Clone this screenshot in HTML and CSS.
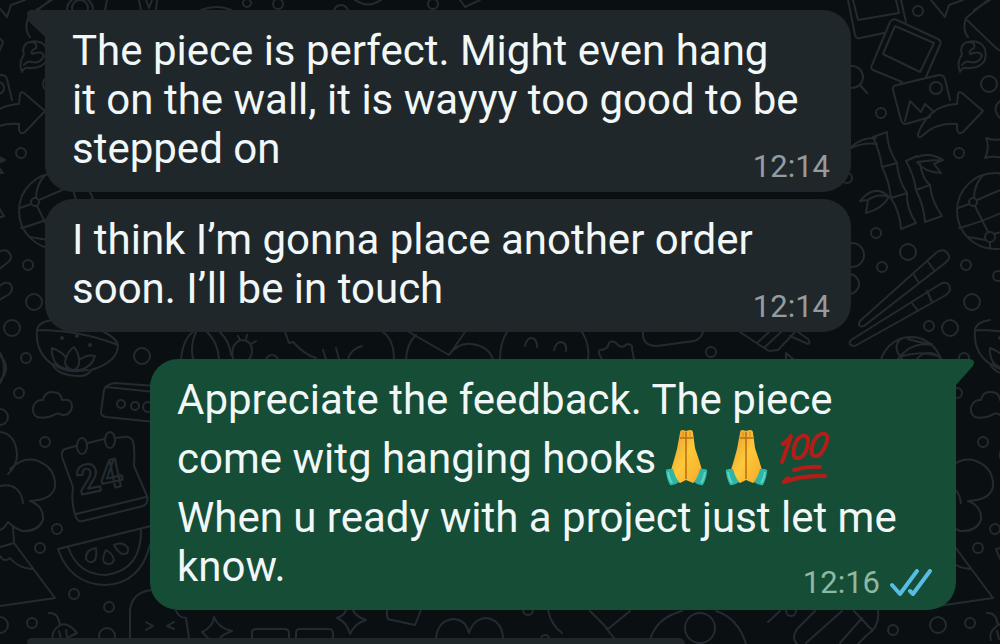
FILE: index.html
```html
<!DOCTYPE html>
<html lang="en">
<head>
<meta charset="utf-8">
<meta name="viewport" content="width=device-width, initial-scale=1">
<title>Chat</title>
<link rel="stylesheet" href="styles.css">
</head>
<body>
<svg class="wallpaper" viewBox="0 0 1000 644" preserveAspectRatio="xMinYMin slice" aria-hidden="true">
  <defs>
    <g id="doodles">
      <!-- top edge -->
      <path d="M36 10L52 0M107 0L105 10M139 0l2 10M157 0l-1 10M146 0l3 8 3-8M355 0q13 9 26 0M460 0l5 7 15-7M199 11q18-8 34 0"/>
      <circle cx="80" cy="10" r="13"/><circle cx="80" cy="8" r="8"/>
      <circle cx="247" cy="3" r="4"/><circle cx="278" cy="4" r="5"/><circle cx="341" cy="12" r="7"/><circle cx="433" cy="4" r="5"/>
      <path d="M931 0L945 17 949 5 963 0M988 0L966 18Q962 30 968 37M967 20L995 47Q1000 52 1004 50"/>
      <!-- flame -->
      <path d="M968 42Q962 43 961 50Q963 55 960 58Q957 64 960 72Q962 67 967 68Q980 69 985 60Q988 48 980 43Q974 40 968 42M968 42Q976 42 974 48Q968 51 970 54Q980 50 982 56Q978 64 970 62Q966 60 962 65"/>
      <!-- photos -->
      <path d="M848 0L855 35Q856 39 860 38L884 33M901 0L906 22M853 0L858 20 899 13 896 0"/>
      <path d="M902 82L873 70Q870 68 872 65L890 22Q893 18 897 20L938 39Q942 41 940 45L926 77M895 26L934 43 920 72 883 54Z"/>
      <path d="M930 117L906 124Q902 124 901 120L893 90Q892 86 897 85L939 75Q944 75 945 79L950 100M905 121L910 101 921 112 925 104 934 112"/>
      <circle cx="936" cy="88" r="6"/>
      <path d="M983 111L962 93Q958 91 958 95L957 104Q929 105 918 134Q918 139 922 136Q936 122 957 124L957 130Q959 135 963 132Z"/>
      <circle cx="852" cy="77" r="11"/><path d="M860 85l7 8"/>
      <circle cx="918" cy="11" r="5"/><circle cx="881" cy="113" r="5"/><circle cx="989" cy="84" r="8"/><circle cx="959" cy="153" r="5"/><circle cx="847" cy="178" r="5"/><circle cx="876" cy="233" r="5"/>
      <path d="M1008 137Q996 142 986 138Q990 148 985 158Q994 155 1008 159M1000 101q-9 7 0 17"/>
      <!-- bamboo -->
      <path d="M873 137L887 132Q887 148 897 163Q898 180 907 193Q906 208 916 223L901 229Q900 212 891 198Q889 180 882 167Q880 152 873 137ZM882 167l15-4M891 198l16-5M851 147Q862 137 876 138M877 144Q864 142 851 148M889 197Q875 183 860 201L868 200 866 213Q882 209 889 197Q878 193 868 200"/>
      <path d="M917 156L906 161Q914 175 916 190Q924 206 925 222L942 216Q931 200 930 185Q923 180 920 164M916 190l14-5M917 157Q930 152 943 160L934 164 941 173Q924 172 917 162Q930 160 943 160"/>
      <!-- globe -->
      <circle cx="995" cy="211" r="38"/>
      <circle cx="973" cy="202" r="4"/><circle cx="990" cy="237" r="5"/>
      <path d="M974 198Q974 185 983 175M977 200L1014 184M975 206L988 232M969 204L958 208M959 228Q990 220 1030 199M994 234L1031 223M986 240L968 237M990 242V249M1000 174L1010 184L1022 235"/>
      <!-- chopsticks -->
      <path d="M860 321L937 252Q945 247 949 256Q950 259 945 263L864 326Q857 328 860 321ZM928 262l6 8M914 275l5 8M851 340L942 283Q950 281 950 290Q949 293 946 295L855 346Q847 346 851 340ZM927 291l5 11M912 303l6 8"/>
      <circle cx="908" cy="252" r="8"/><circle cx="882" cy="267" r="5"/><circle cx="966" cy="265" r="5"/><circle cx="998" cy="276" r="5"/><circle cx="972" cy="302" r="8"/><circle cx="929" cy="326" r="5"/><circle cx="950" cy="328" r="8"/><circle cx="852" cy="255" r="12"/><circle cx="849" cy="284" r="10"/><circle cx="964" cy="358" r="5"/><circle cx="957" cy="393" r="5"/>
      <circle cx="911" cy="368" r="31"/><path d="M902 338Q891 346 902 359M908 339Q920 343 932 344M898 359Q912 341 932 345M902 356Q924 350 940 357"/>
      <!-- lotus bowl -->
      <path d="M37 330Q35 352 52 364Q58 376 80 376Q88 376 91 370Q118 362 118 345Q116 338 104 332M37 330Q80 330 118 345M37 330Q38 322 52 320M54 364Q64 374 88 370"/>
      <path d="M52 348Q63 352 66 358Q69 350 74 347Q79 354 79 360Q87 354 95 356Q92 367 80 370Q60 370 55 362Q51 354 52 348ZM66 358Q63 366 70 369M79 360Q80 366 75 370"/>
      <circle cx="62" cy="338" r="1"/><circle cx="77" cy="336" r="1"/><circle cx="90" cy="345" r="1"/>
      <circle cx="142" cy="356" r="8"/><circle cx="45" cy="442" r="5"/><circle cx="0" cy="417" r="8"/><circle cx="-9" cy="368" r="15"/>
      <!-- cloud and radio -->
      <path d="M37 417Q32 414 33 407Q36 399 43 400Q45 391 53 392Q61 392 62 400Q72 398 72 407Q70 416 62 415Q58 412 54 415Q46 419 37 417Z"/>
      <path d="M155 386L115 383Q106 384 104 390L101 412Q101 416 106 417L155 422M106 387L155 392"/>
      <circle cx="121" cy="404" r="4"/><circle cx="135" cy="406" r="4"/><circle cx="148" cy="407" r="5"/>
      <!-- calendar -->
      <path d="M76 446L65 449Q61 451 62 457L73 487Q71 503 75 514Q77 523 83 521L143 506Q149 503 147 496L134 466Q135 450 133 441Q130 436 124 437L116 438M88 443l16-4M76 514L146 497"/>
      <ellipse cx="82" cy="446" rx="5" ry="8"/><ellipse cx="110" cy="440" rx="5" ry="8"/>
      <text class="calendar-day" x="80" y="495" transform="rotate(-12 80 495)">24</text>
      <!-- clouds and mountain -->
      <path d="M0 432Q16 434 17 455Q17 466 8 474M10 469Q24 456 38 461Q56 468 55 487Q52 500 30 501Q44 506 43 520Q38 532 22 531Q14 528 8 522Q4 529 0 530M0 486Q20 482 23 503M13 527L14 542M0 547L14 543 55 598 0 606M0 556Q4 563 10 558Q18 568 32 569"/>
      <circle cx="57" cy="529" r="5"/><circle cx="40" cy="548" r="5"/><circle cx="74" cy="594" r="5"/><circle cx="109" cy="607" r="5"/><circle cx="32" cy="623" r="5"/><circle cx="0" cy="625" r="8"/><circle cx="107" cy="636" r="8"/>
      <!-- watermelon -->
      <path d="M58 549L155 525M58 549Q70 584 105 585Q140 584 150 545M68 547Q78 575 106 575Q142 570 141 529M96 548Q85 550 86 559Q90 565 95 560Q97 555 96 548ZM106 550Q101 560 105 563Q111 566 114 560Q113 554 106 550ZM114 545Q123 541 128 548Q129 555 122 554Q117 551 114 545Z"/>
      <path d="M49 613Q58 612 60 625Q50 632 53 640M60 625Q68 622 77 633l-8 4M59 631l2 8M66 630l1 8"/>
      <!-- bottom edge -->
      <path d="M130 638V610Q132 592 152 590M146 622l7 4-7 4M174 622l-7 4 7 3M175 608Q178 618 186 618L189 638"/>
      <path d="M208 638L202 632Q213 627 214 617Q218 628 232 631Q222 635 220 638M252 638v-5q0-4 4-4h28q5 0 5 4v5M296 638v-5q0-4 4-4h28q5 0 5 4v5M346 610Q345 615 337 618Q347 622 350 634Q355 623 366 620Q356 617 353 610M387 610v6q0 4 5 4l23 5 6-15M436 638Q438 620 454 619Q466 620 469 633Q474 618 487 618Q502 621 503 638"/>
      <circle cx="528" cy="610" r="5"/><circle cx="545" cy="639" r="4"/>
      <path d="M548 610Q551 625 562 633M590 611l18 18 22-18M606 628l8 10M650 640Q656 618 682 611M716 611Q738 618 746 644"/>
      <circle cx="700" cy="628" r="15"/>
      <path d="M797 644Q791 638 797 629L815 611M806 643L842 611M840 643L862 618M854 611L871 629M878 610Q880 627 867 635L858 644M780 611l-12 11"/>
      <circle cx="791" cy="611" r="5"/><circle cx="893" cy="630" r="5"/>
      <!-- between the second and third messages -->
      <path d="M181 362Q182 340 193 332M193 359Q190 345 196 332M207 332Q218 342 219 359M220 332Q230 342 231 355M233 359Q230 345 240 340Q252 340 252 350Q252 356 249 359M240 340l-2-4M246 339l1-4M251 344l5-3M285 332l4 11 4-1Q305 355 316 358M323 350l3 9M336 348l3 11M348 359q3-10 14-13M383 332Q394 340 394 359M406 359Q407 343 416 335M409 332L449 355 465 332M449 355Q458 342 472 344Q488 346 493 359M500 359Q500 343 507 332M582 332Q590 345 588 359M525 346q2-9 7-8 5 1 5 9M554 350q2-8 7-8 6 1 5 9M602 359Q597 352 600 350Q608 350 609 343Q613 339 618 345Q622 349 627 344Q633 344 632 349L634 359"/>
      <path d="M643 332Q642 346 657 346L694 341Q701 339 703 332M740 332L758 344 769 351 778 350 795 332M757 343l12-11M765 347l16-15M790 336l18 8q3-1 0-5l-10-7M786 361V353l8 7"/>
      <circle cx="272" cy="361" r="6"/><circle cx="711" cy="352" r="5"/>
    </g>
  </defs>
  <use href="#doodles"/>
  <use href="#doodles" x="938"/>
  <use href="#doodles" x="-938"/>
</svg>

<svg class="symbols" aria-hidden="true">
  <defs>
    <linearGradient id="skin" x1="0" y1="0" x2="1" y2="1">
      <stop offset="0" stop-color="#e39a2c"/><stop offset=".5" stop-color="#ffc83a"/><stop offset="1" stop-color="#f3a928"/>
    </linearGradient>
    <symbol id="pray" viewBox="0 0 60 69">
      <path fill="url(#skin)" d="M30 7Q24 4 24 9L21 25 18 36 15 46Q17 55 24 59L30 56 37 59Q44 55 46 46L43 36 39 24 37 9Q37 4 30 7Z"/>
      <path fill="none" stroke="#b86e13" stroke-width="1.500" d="M30 8V55M24 14h13"/>
      <path fill="none" stroke="#d98a20" d="M27 8v6M34 8v6"/>
      <path fill="#2fb5a6" d="M10 48Q9 45 13 45L17 45Q19 53 23 58Q18 62 14 61Q11 56 10 48ZM51 48Q52 45 48 45L44 45Q42 53 38 58Q43 62 47 61Q50 56 51 48Z"/>
      <path fill="none" stroke="#5fd2c5" stroke-width="2" d="M12 48Q13 55 16 59M49 48Q48 55 45 59"/>
    </symbol>
    <symbol id="hundred" viewBox="0 0 60 69">
      <g fill="none" stroke="#b51d18" stroke-width="4" stroke-linecap="round" stroke-linejoin="round">
        <path d="M7 20Q13 16 15 12Q11 25 6 38"/>
        <path d="M24 13Q33 9 32 19Q30 32 23 34Q16 35 18 24Q20 16 24 13ZM43 11Q53 7 51 17Q48 28 42 32Q34 34 36 23Q38 14 43 11Z"/>
        <path d="M18 46Q31 42 44 43M8 58Q27 51 49 52M8 58l4-4"/>
      </g>
    </symbol>
    <symbol id="tail" viewBox="0 0 20 28">
      <path d="M0 0H14Q20 1 17 7L0 26Z"/>
    </symbol>
  </defs>
</svg>

<main class="chat">
  <article class="message incoming">
    <svg class="tail" aria-hidden="true"><use href="#tail"/></svg>
    <p class="text">The piece is perfect. Might even hang<br>it on the wall, it is wayyy too good to be stepped on <span class="meta"><time>12:14</time></span></p>
  </article>
  <article class="message incoming follow-up">
    <p class="text">I think I’m gonna place another order soon. I’ll be in touch <span class="meta"><time>12:14</time></span></p>
  </article>
  <article class="message outgoing">
    <svg class="tail" aria-hidden="true"><use href="#tail"/></svg>
    <p class="text">Appreciate the feedback. The piece come witg hanging hooks<svg class="emoji" role="img" aria-label="Folded hands"><use href="#pray"/></svg><svg class="emoji" role="img" aria-label="Folded hands"><use href="#pray"/></svg><svg class="emoji" role="img" aria-label="Hundred points"><use href="#hundred"/></svg><br>When u ready with a project just let me know. <span class="meta"><time>12:16</time><svg class="ticks" viewBox="0 0 42 28" role="img" aria-label="Read"><path d="M2 16L10 25 27 2M20 22l3 3L40 2"/></svg></span></p>
  </article>
  <article class="message incoming next">
    <svg class="tail" aria-hidden="true"><use href="#tail"/></svg>
  </article>
</main>
</body>
</html>
```
FILE: styles.css
```css
* {
  box-sizing: border-box;
}

body {
  margin: 0;
  height: 100vh;
  overflow: hidden;
  position: relative;
  background: #0a0f12;
  color: #f1f7f7;
  font-family: Roboto, "Noto Sans", sans-serif;
}

.wallpaper {
  position: absolute;
  inset: 0;
  width: 100%;
  height: 100%;
  fill: none;
  stroke: #242b30;
  stroke-width: 2;
  stroke-linecap: round;
  stroke-linejoin: round;
}

.calendar-day {
  font: bold 40px Roboto, sans-serif;
}

.symbols {
  position: absolute;
  width: 0;
  height: 0;
}

.chat {
  position: relative;
  display: flex;
  flex-direction: column;
  height: 100%;
  overflow: hidden;
  padding: 10px 44px 0 45px;
}

.message {
  position: relative;
  flex-shrink: 0;
  width: 100%;
  max-width: 806px;
  padding: 16px 21px 19px 27px;
  border-radius: 28px;
}

.incoming {
  background: #20272b;
  border-top-left-radius: 0;
}

.follow-up {
  margin-top: 7px;
  border-top-left-radius: 28px;
}

.outgoing {
  align-self: flex-end;
  margin-top: 27px;
  background: #154d37;
  border-top-right-radius: 0;
}

.next {
  flex: 1 1 0;
  max-width: 640px;
  min-height: 0;
  margin-top: 28px;
  padding: 0;
  border-radius: 0 28px 0 0;
}

.tail {
  position: absolute;
  top: 0;
  left: 100%;
  width: 20px;
  height: 28px;
  fill: #154d37;
}

.incoming .tail {
  right: 100%;
  left: auto;
  fill: #20272b;
  transform: scaleX(-1);
}

.text {
  margin: 0;
  padding-right: 28px;
  font-size: 42px;
  line-height: 49px;
}

.meta {
  float: right;
  display: flex;
  align-items: center;
  gap: 10px;
  margin: 25px -28px -12px 0;
  color: #959c9f;
  font-size: 31px;
  line-height: 36px;
}

.outgoing .meta {
  margin-top: 23px;
  margin-right: -25px;
  color: #8fb8a3;
}

.emoji {
  width: 60px;
  height: 69px;
  vertical-align: -20px;
}

.ticks {
  width: 42px;
  height: 28px;
  fill: none;
  stroke: #58bde3;
  stroke-width: 4;
  stroke-linecap: round;
  stroke-linejoin: round;
}
```
